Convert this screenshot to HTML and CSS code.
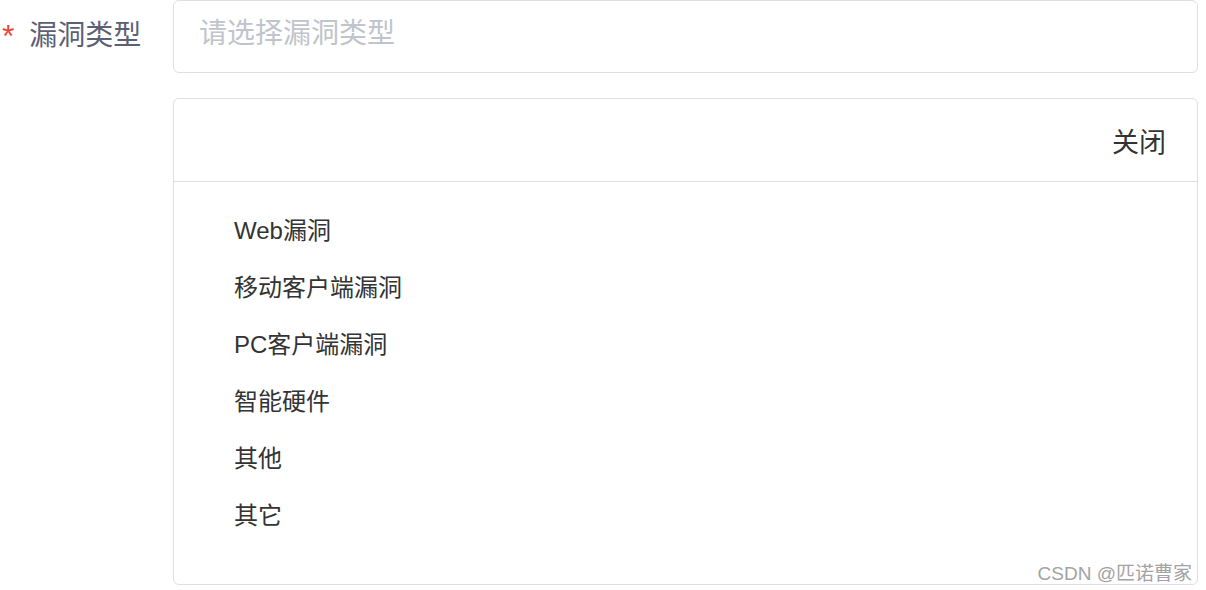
FILE: index.html
```html
<!DOCTYPE html>
<html lang="zh-CN">
  <head>
    <meta charset="UTF-8" />
    <title>漏洞类型</title>
    <link rel="stylesheet" href="styles.css">
  </head>
  <body>
    <div class="form-item">
      <label class="form-label"><span class="required">*</span> 漏洞类型</label>
      <div class="form-field">
        <div class="select-input">请选择漏洞类型</div>

        <!-- 下拉面板 -->
        <div class="picker">
          <div class="picker-header">
            <span class="picker-close">关闭</span>
          </div>
          <ul class="picker-list">
            <li>Web漏洞</li>
            <li>移动客户端漏洞</li>
            <li>PC客户端漏洞</li>
            <li>智能硬件</li>
            <li>其他</li>
            <li>其它</li>
          </ul>
          <span class="watermark">CSDN @匹诺曹家</span>
        </div>
      </div>
    </div>
  </body>
</html>
```

FILE: styles.css
```css
:root {
  --border: #dcdfe6;
  --text: #333;
  --label: #5b6075;
  --placeholder: #c0c4cc;
  --danger: #e5493f;
}

body {
  margin: 0;
  font-family: "Liberation Sans", "Noto Sans CJK SC", sans-serif;
  background: #fff;
  color: var(--text);
}

.form-item {
  display: flex;
}

.form-label {
  width: 173px;
  flex-shrink: 0;
  padding-left: 2px;
  box-sizing: border-box;
  font-size: 28px;
  line-height: 72px;
  color: var(--label);
}

.required {
  color: var(--danger);
  font-size: 32px;
  vertical-align: -2px;
  margin-right: 7px;
}

.form-field {
  width: 1025px;
}

.select-input {
  height: 73px;
  box-sizing: border-box;
  border: 1px solid var(--border);
  border-radius: 6px;
  padding: 0 25px;
  font-size: 28px;
  line-height: 66px;
  color: var(--placeholder);
}

.picker {
  position: relative;
  margin-top: 25px;
  border: 1px solid var(--border);
  border-radius: 6px;
}

.picker-header {
  display: flex;
  justify-content: flex-end;
  align-items: center;
  height: 82px;
  padding-right: 31px;
  border-bottom: 1px solid var(--border);
}

.picker-close {
  font-size: 27px;
  cursor: pointer;
}

.picker-list {
  list-style: none;
  margin: 0;
  padding: 20px 0 40px 60px;
}

.picker-list li {
  font-size: 24px;
  line-height: 57px;
}

/* 截图水印 */
.watermark {
  position: absolute;
  right: 5px;
  bottom: -1px;
  font-size: 19px;
  color: #a3a3a3;
}
```
